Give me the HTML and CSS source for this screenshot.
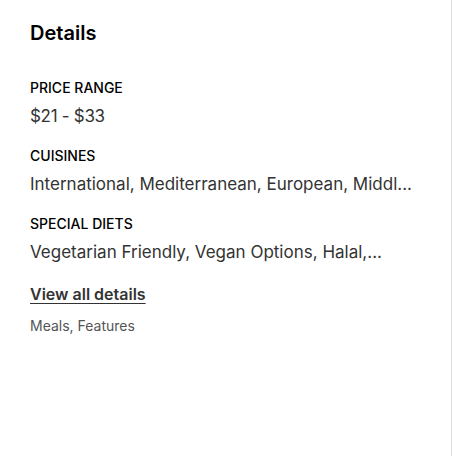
FILE: index.html
```html
<!DOCTYPE html>
<html lang="en">
<head>
<meta charset="utf-8">
<title>Details</title>
<link rel="stylesheet" href="styles.css">
</head>
<body>
<section class="panel">
  <h2 class="title">Details</h2>
  <div class="group">
    <div class="label">PRICE RANGE</div>
    <div class="value price">$21 - $33</div>
  </div>
  <div class="group">
    <div class="label">CUISINES</div>
    <div class="value">International, Mediterranean, European, Middl...</div>
  </div>
  <div class="group">
    <div class="label">SPECIAL DIETS</div>
    <div class="value">Vegetarian Friendly, Vegan Options, Halal,...</div>
  </div>
  <div class="more">
    <a class="link" href="#">View all details</a>
    <div class="sub">Meals, Features</div>
  </div>
</section>
</body>
</html>
```
FILE: styles.css
```css
html, body {
  margin: 0;
  padding: 0;
  background: #ffffff;
}
body {
  font-family: "Inter", "Lato", sans-serif;
  color: #000;
}
.panel {
  box-sizing: border-box;
  width: 452px;
  height: 456px;
  border-right: 1px solid #e0e0e0;
  padding: 19px 30px 0 30px;
  display: flex;
  flex-direction: column;
}
.title {
  margin: 0;
  font-size: 20px;
  font-weight: 600;
  line-height: 28px;
  color: #000;
}
.group {
  display: flex;
  flex-direction: column;
  gap: 8px;
}
.panel > .title + .group { margin-top: 32px; }
.group + .group { margin-top: 20px; }
.label {
  font-size: 14px;
  font-weight: 500;
  line-height: 18px;
  color: #000;
}
.value {
  font-size: 17px;
  line-height: 22px;
  color: #333;
  white-space: nowrap;
}
.price {
  letter-spacing: -0.3px;
}
.more {
  margin-top: 20px;
  display: flex;
  flex-direction: column;
  gap: 12px;
}
.link {
  font-size: 16px;
  font-weight: 600;
  line-height: 22px;
  color: #333;
  text-decoration: underline;
  text-underline-offset: 3px;
  align-self: flex-start;
}
.sub {
  font-size: 14px;
  line-height: 18px;
  color: #555;
}
```
